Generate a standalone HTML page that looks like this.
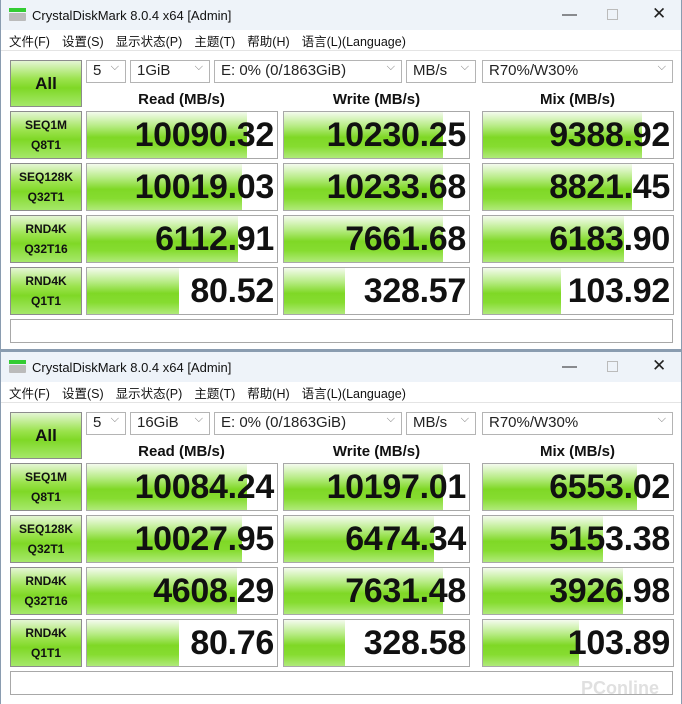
<!DOCTYPE html><html><head><meta charset="utf-8"><style>
*{margin:0;padding:0;box-sizing:border-box}
body{width:682px;height:704px;background:#fff;position:relative;overflow:hidden;font-family:"Liberation Sans","Noto Sans CJK SC",sans-serif}
.w{position:absolute;left:0;width:682px;height:352px;background:#fff;border-left:1px solid #8a9cb0;border-right:1px solid #8a9cb0}
.tb{position:absolute;left:0;top:0;width:100%;height:30px;background:#eef3f9}
.tt{position:absolute;left:31px;top:8px;font-size:13px;color:#111}
.ic{position:absolute;left:8px;top:8px;width:17px;height:14px}
.ctl{position:absolute;top:6px;font-size:15px;color:#222}
.mn{position:absolute;top:31px;left:8px;font-size:12.5px;color:#111;white-space:nowrap}
.mn span{margin-right:12px}
.line{position:absolute;left:0;top:50px;width:100%;height:1px;background:#e4e4e4}
.btn{position:absolute;left:9px;width:72px;border:1px solid #8c8c8c;background:linear-gradient(#e4f6d4 0%,#9be34d 40%,#7fd826 60%,#a5e86a 100%);text-align:center;font-weight:bold;color:#111}
.cb{position:absolute;top:60px;height:23px;border:1px solid #b4b4b4;background:#fff;font-size:15px;color:#222;padding:1px 0 0 6px}
.cb:after{content:"⌵";position:absolute;right:6px;top:0;font-size:11px;color:#777}
.hd{position:absolute;top:91px;font-weight:bold;font-size:15px;text-align:center;color:#111}
.c{position:absolute;height:48px;border:1px solid #a8a8a8;background:#fff;overflow:hidden}
.c i{position:absolute;left:0;top:0;bottom:0;background:linear-gradient(#f4fbee 0%,#b8ec86 30%,#7fd826 55%,#86dc30 75%,#b0ea7a 100%)}
.c b{position:absolute;right:3px;top:4px;font-size:34px;color:#111;letter-spacing:-0.3px}
.st{position:absolute;left:9px;top:319px;width:663px;height:24px;border:1px solid #a8a8a8;background:#fff}
</style></head><body>

<!-- window 1 -->
<div class="w" style="top:0">
<div class="tb"><svg class="ic" viewBox="0 0 17 14"><rect x="0" y="0" width="17" height="4" fill="#3c3"/><rect x="0" y="5" width="17" height="8" rx="1" fill="#bbb"/></svg>
<div class="tt">CrystalDiskMark 8.0.4 x64 [Admin]</div>
<div class="ctl" style="left:561px">—</div><div class="ctl" style="left:606px;width:11px;height:11px;border:1px solid #bbb;top:9px"></div><div class="ctl" style="left:651px;font-size:17px;top:4px">✕</div></div>
<div class="mn"><span>文件(F)</span><span>设置(S)</span><span>显示状态(P)</span><span>主题(T)</span><span>帮助(H)</span><span>语言(L)(Language)</span></div>
<div class="line"></div>
<div class="btn" style="top:60px;height:47px;font-size:17px;line-height:45px">All</div>
<div class="cb" style="left:85px;width:40px">5</div>
<div class="cb" style="left:129px;width:80px">1GiB</div>
<div class="cb" style="left:213px;width:188px">E: 0% (0/1863GiB)</div>
<div class="cb" style="left:405px;width:70px">MB/s</div>
<div class="cb" style="left:481px;width:191px">R70%/W30%</div>
<div class="hd" style="left:85px;width:191px">Read (MB/s)</div>
<div class="hd" style="left:282px;width:187px">Write (MB/s)</div>
<div class="hd" style="left:481px;width:191px">Mix (MB/s)</div>

<div class="btn" style="top:111px;height:48px;font-size:12px;line-height:20px;padding-top:3px">SEQ1M<br>Q8T1</div>
<div class="c" style="left:85px;top:111px;width:192px"><i style="width:160px"></i><b>10090.32</b></div>
<div class="c" style="left:282px;top:111px;width:187px"><i style="width:159px"></i><b>10230.25</b></div>
<div class="c" style="left:481px;top:111px;width:192px"><i style="width:159px"></i><b>9388.92</b></div>

<div class="btn" style="top:163px;height:48px;font-size:12px;line-height:20px;padding-top:3px">SEQ128K<br>Q32T1</div>
<div class="c" style="left:85px;top:163px;width:192px"><i style="width:155px"></i><b>10019.03</b></div>
<div class="c" style="left:282px;top:163px;width:187px"><i style="width:159px"></i><b>10233.68</b></div>
<div class="c" style="left:481px;top:163px;width:192px"><i style="width:149px"></i><b>8821.45</b></div>

<div class="btn" style="top:215px;height:48px;font-size:12px;line-height:20px;padding-top:3px">RND4K<br>Q32T16</div>
<div class="c" style="left:85px;top:215px;width:192px"><i style="width:151px"></i><b>6112.91</b></div>
<div class="c" style="left:282px;top:215px;width:187px"><i style="width:159px"></i><b>7661.68</b></div>
<div class="c" style="left:481px;top:215px;width:192px"><i style="width:141px"></i><b>6183.90</b></div>

<div class="btn" style="top:267px;height:48px;font-size:12px;line-height:20px;padding-top:3px">RND4K<br>Q1T1</div>
<div class="c" style="left:85px;top:267px;width:192px"><i style="width:92px"></i><b>80.52</b></div>
<div class="c" style="left:282px;top:267px;width:187px"><i style="width:61px"></i><b>328.57</b></div>
<div class="c" style="left:481px;top:267px;width:192px"><i style="width:78px"></i><b>103.92</b></div>
<div class="st"></div>
<div style="position:absolute;left:0;top:349px;width:682px;height:3px;background:#8a9cb0"></div>
</div>

<!-- window 2 -->
<div class="w" style="top:352px">
<div class="tb"><svg class="ic" viewBox="0 0 17 14"><rect x="0" y="0" width="17" height="4" fill="#3c3"/><rect x="0" y="5" width="17" height="8" rx="1" fill="#bbb"/></svg>
<div class="tt">CrystalDiskMark 8.0.4 x64 [Admin]</div>
<div class="ctl" style="left:561px">—</div><div class="ctl" style="left:606px;width:11px;height:11px;border:1px solid #bbb;top:9px"></div><div class="ctl" style="left:651px;font-size:17px;top:4px">✕</div></div>
<div class="mn"><span>文件(F)</span><span>设置(S)</span><span>显示状态(P)</span><span>主题(T)</span><span>帮助(H)</span><span>语言(L)(Language)</span></div>
<div class="line"></div>
<div class="btn" style="top:60px;height:47px;font-size:17px;line-height:45px">All</div>
<div class="cb" style="left:85px;width:40px">5</div>
<div class="cb" style="left:129px;width:80px">16GiB</div>
<div class="cb" style="left:213px;width:188px">E: 0% (0/1863GiB)</div>
<div class="cb" style="left:405px;width:70px">MB/s</div>
<div class="cb" style="left:481px;width:191px">R70%/W30%</div>
<div class="hd" style="left:85px;width:191px">Read (MB/s)</div>
<div class="hd" style="left:282px;width:187px">Write (MB/s)</div>
<div class="hd" style="left:481px;width:191px">Mix (MB/s)</div>

<div class="btn" style="top:111px;height:48px;font-size:12px;line-height:20px;padding-top:3px">SEQ1M<br>Q8T1</div>
<div class="c" style="left:85px;top:111px;width:192px"><i style="width:160px"></i><b>10084.24</b></div>
<div class="c" style="left:282px;top:111px;width:187px"><i style="width:159px"></i><b>10197.01</b></div>
<div class="c" style="left:481px;top:111px;width:192px"><i style="width:154px"></i><b>6553.02</b></div>

<div class="btn" style="top:163px;height:48px;font-size:12px;line-height:20px;padding-top:3px">SEQ128K<br>Q32T1</div>
<div class="c" style="left:85px;top:163px;width:192px"><i style="width:155px"></i><b>10027.95</b></div>
<div class="c" style="left:282px;top:163px;width:187px"><i style="width:150px"></i><b>6474.34</b></div>
<div class="c" style="left:481px;top:163px;width:192px"><i style="width:120px"></i><b>5153.38</b></div>

<div class="btn" style="top:215px;height:48px;font-size:12px;line-height:20px;padding-top:3px">RND4K<br>Q32T16</div>
<div class="c" style="left:85px;top:215px;width:192px"><i style="width:150px"></i><b>4608.29</b></div>
<div class="c" style="left:282px;top:215px;width:187px"><i style="width:159px"></i><b>7631.48</b></div>
<div class="c" style="left:481px;top:215px;width:192px"><i style="width:140px"></i><b>3926.98</b></div>

<div class="btn" style="top:267px;height:48px;font-size:12px;line-height:20px;padding-top:3px">RND4K<br>Q1T1</div>
<div class="c" style="left:85px;top:267px;width:192px"><i style="width:92px"></i><b>80.76</b></div>
<div class="c" style="left:282px;top:267px;width:187px"><i style="width:61px"></i><b>328.58</b></div>
<div class="c" style="left:481px;top:267px;width:192px"><i style="width:96px"></i><b>103.89</b></div>
<div class="st"></div>
<div style="position:absolute;left:580px;top:326px;font-size:18px;color:#e0e0e0;font-weight:bold">PConline</div>
</div>
</body></html>
